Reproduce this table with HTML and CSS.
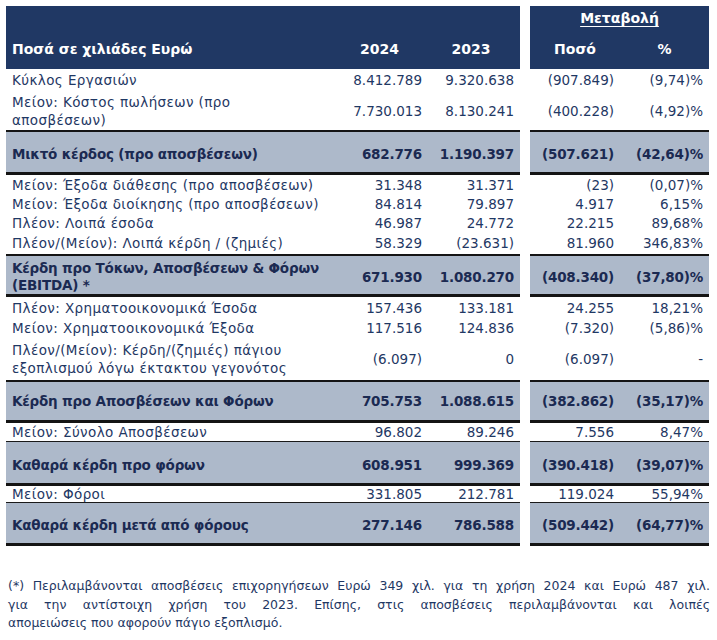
FILE: index.html
```html
<!DOCTYPE html>
<html lang="el">
<head>
<meta charset="utf-8">
<title>Αποτελέσματα</title>
<link rel="stylesheet" href="styles.css">
</head>
<body>
<div class="page">
  <div class="hdr">
    <div class="h-title">Ποσά σε χιλιάδες Ευρώ</div>
    <div class="h-y">2024</div>
    <div class="h-y">2023</div>
    <div class="gap"></div>
    <div class="h-right">
      <div class="h-chg"><span>Μεταβολή</span></div>
      <div class="h-sub"><span>Ποσό</span><span>%</span></div>
    </div>
  </div>

  <div class="row r20 pt2"><div class="c lbl">Κύκλος Εργασιών</div><div class="c n">8.412.789</div><div class="c n">9.320.638</div><div class="gap"></div><div class="c n">(907.849)</div><div class="c n">(9,74)%</div></div>
  <div class="row r41 pt2"><div class="c lbl">Μείον: Κόστος πωλήσεων (προ<br>αποσβέσεων)</div><div class="c n">7.730.013</div><div class="c n">8.130.241</div><div class="gap"></div><div class="c n">(400.228)</div><div class="c n">(4,92)%</div></div>
  <div class="row total tt r40 pt3"><div class="c lbl">Μικτό κέρδος (προ αποσβέσεων)</div><div class="c n">682.776</div><div class="c n">1.190.397</div><div class="gap"></div><div class="c n">(507.621)</div><div class="c n">(42,64)%</div></div>
  <div class="row r20"><div class="c lbl">Μείον: Έξοδα διάθεσης (προ αποσβέσεων)</div><div class="c n">31.348</div><div class="c n">31.371</div><div class="gap"></div><div class="c n">(23)</div><div class="c n">(0,07)%</div></div>
  <div class="row r18"><div class="c lbl">Μείον: Έξοδα διοίκησης (προ αποσβέσεων)</div><div class="c n">84.814</div><div class="c n">79.897</div><div class="gap"></div><div class="c n">4.917</div><div class="c n">6,15%</div></div>
  <div class="row r19"><div class="c lbl">Πλέον: Λοιπά έσοδα</div><div class="c n">46.987</div><div class="c n">24.772</div><div class="gap"></div><div class="c n">22.215</div><div class="c n">89,68%</div></div>
  <div class="row r22"><div class="c lbl">Πλέον/(Μείον): Λοιπά κέρδη / (ζημιές)</div><div class="c n">58.329</div><div class="c n">(23.631)</div><div class="gap"></div><div class="c n">81.960</div><div class="c n">346,83%</div></div>
  <div class="row total tt r38 pt4"><div class="c lbl lh17">Κέρδη προ Τόκων, Αποσβέσεων &amp; Φόρων<br>(EBITDA) *</div><div class="c n">671.930</div><div class="c n">1.080.270</div><div class="gap"></div><div class="c n">(408.340)</div><div class="c n">(37,80)%</div></div>
  <div class="row r21"><div class="c lbl">Πλέον: Χρηματοοικονομικά Έσοδα</div><div class="c n">157.436</div><div class="c n">133.181</div><div class="gap"></div><div class="c n">24.255</div><div class="c n">18,21%</div></div>
  <div class="row r19"><div class="c lbl">Μείον: Χρηματοοικονομικά Έξοδα</div><div class="c n">117.516</div><div class="c n">124.836</div><div class="gap"></div><div class="c n">(7.320)</div><div class="c n">(5,86)%</div></div>
  <div class="row r43"><div class="c lbl">Πλέον/(Μείον): Κέρδη/(ζημιές) πάγιου<br>εξοπλισμού λόγω έκτακτου γεγονότος</div><div class="c n">(6.097)</div><div class="c n">0</div><div class="gap"></div><div class="c n">(6.097)</div><div class="c n">-</div></div>
  <div class="row total tt r38"><div class="c lbl">Κέρδη προ Αποσβέσεων και Φόρων</div><div class="c n">705.753</div><div class="c n">1.088.615</div><div class="gap"></div><div class="c n">(382.862)</div><div class="c n">(35,17)%</div></div>
  <div class="row r18 bb1"><div class="c lbl">Μείον: Σύνολο Αποσβέσεων</div><div class="c n">96.802</div><div class="c n">89.246</div><div class="gap"></div><div class="c n">7.556</div><div class="c n">8,47%</div></div>
  <div class="row total r41 pt4"><div class="c lbl">Καθαρά κέρδη προ φόρων</div><div class="c n">608.951</div><div class="c n">999.369</div><div class="gap"></div><div class="c n">(390.418)</div><div class="c n">(39,07)%</div></div>
  <div class="row r16 bb1"><div class="c lbl">Μείον: Φόροι</div><div class="c n">331.805</div><div class="c n">212.781</div><div class="gap"></div><div class="c n">119.024</div><div class="c n">55,94%</div></div>
  <div class="row total r40 pt4"><div class="c lbl">Καθαρά κέρδη μετά από φόρους</div><div class="c n">277.146</div><div class="c n">786.588</div><div class="gap"></div><div class="c n">(509.442)</div><div class="c n">(64,77)%</div></div>

  <div class="note">
    <div class="nl j">(*) Περιλαμβάνονται αποσβέσεις επιχορηγήσεων Ευρώ 349 χιλ. για τη χρήση 2024 και Ευρώ 487 χιλ.</div>
    <div class="nl j">για την αντίστοιχη χρήση του 2023. Επίσης, στις αποσβέσεις περιλαμβάνονται και λοιπές</div>
    <div class="nl">απομειώσεις που αφορούν πάγιο εξοπλισμό.</div>
  </div>
</div>
</body>
</html>
```

FILE: styles.css
```css
* { box-sizing: border-box; margin: 0; padding: 0; }

body {
  margin: 0;
  background: #ffffff;
  font-family: "DejaVu Sans", sans-serif;
  font-size: 13.5px;
  color: #1f3864;
}

.page {
  width: 717px;
  padding: 6px 0 0 6px;
}

.hdr,
.row {
  display: grid;
  grid-template-columns: 331px 91px 92px 10px 90px 89px;
}

/* header */
.hdr {
  height: 63px;
  color: #ffffff;
  font-weight: bold;
  font-size: 14px;
  line-height: 18px;
}
.hdr > div:not(.gap) { background: #203864; }
.h-title {
  display: flex;
  align-items: flex-end;
  padding: 0 0 11px 6px;
  white-space: nowrap;
}
.h-y {
  display: flex;
  align-items: flex-end;
  justify-content: center;
  padding: 0 6px 11px 0;
}
.h-right {
  grid-column: span 2;
  display: flex;
  flex-direction: column;
  justify-content: space-between;
}
.h-chg {
  text-align: center;
  padding-top: 3px;
}
.h-chg span {
  text-decoration: underline;
  text-underline-offset: 3px;
  text-decoration-thickness: 1px;
}
.h-sub {
  display: grid;
  grid-template-columns: 90px 89px;
  text-align: center;
  padding-bottom: 11px;
}

/* body rows */
.c {
  display: flex;
  align-items: center;
  line-height: 18px;
  white-space: nowrap;
}
.lbl { padding-left: 6px; letter-spacing: 0.4px; }
.lh17 { line-height: 17px; }
.n {
  justify-content: flex-end;
  padding-right: 6px;
}

.r16 { height: 16px; }
.r18 { height: 18px; }
.r19 { height: 19px; }
.r20 { height: 20px; }
.r21 { height: 21px; }
.r22 { height: 22px; }
.r38 { height: 38px; }
.r40 { height: 40px; }
.r41 { height: 41px; }
.r43 { height: 43px; }

.pt2 .c { padding-top: 2px; }
.pt3 .c { padding-top: 3px; }
.pt4 .c { padding-top: 4px; }

.bb1 { height: auto; }
.bb1 .c { border-bottom: 1px solid #1a1a1a; }
.bb1.r18 .c { height: 19px; }
.bb1.r16 .c { height: 17px; }

.total .c {
  background: #adb9ca;
  font-weight: bold;
  color: #1b2a52;
  border-bottom: 3px solid #141414;
  letter-spacing: -0.2px;
}
.total { height: auto; }
.total.r38 .c { height: 41px; }
.total.r40 .c { height: 43px; }
.total.r41 .c { height: 44px; }
.total.tt .c {
  border-top: 2px solid #141414;
}
.total.tt.r38 .c { height: 43px; }
.total.tt.r40 .c { height: 45px; }

/* footnote */
.note {
  width: 702px;
  margin: 31px 0 0 2px;
  font-size: 12.5px;
  line-height: 18.5px;
  color: #1f3864;
}
.nl { white-space: nowrap; }
.nl.j {
  white-space: normal;
  text-align: justify;
  text-align-last: justify;
}
```
